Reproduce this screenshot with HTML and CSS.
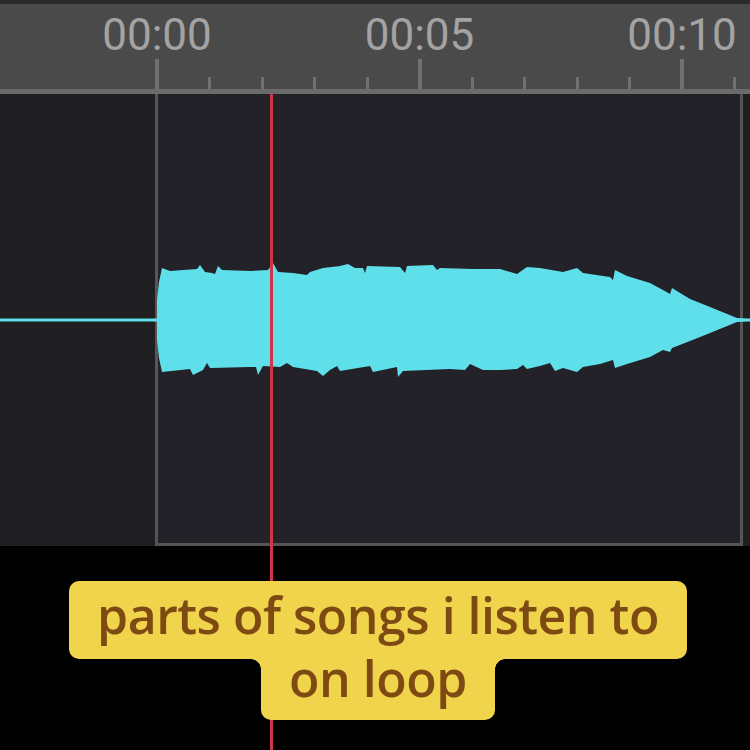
FILE: index.html
```html
<!DOCTYPE html>
<html lang="en">
<head>
    <meta charset="UTF-8">
    <meta name="viewport" content="width=device-width, initial-scale=1.0">
    <title>Loop Editor</title>
    <link rel="stylesheet" href="styles.css">
</head>
<body>
    <div class="screen">
        <div class="topbar"></div>

        <div class="ruler">
            <div class="labels">
                <span class="label">00:00</span>
                <span class="label">00:05</span>
                <span class="label">00:10</span>
            </div>
            <div class="ticks">
                <div class="tick major"></div>
                <div class="tick"></div>
                <div class="tick"></div>
                <div class="tick"></div>
                <div class="tick"></div>
                <div class="tick major"></div>
                <div class="tick"></div>
                <div class="tick"></div>
                <div class="tick"></div>
                <div class="tick"></div>
                <div class="tick major"></div>
                <div class="tick"></div>
            </div>
        </div>
        <div class="ruler-line"></div>

        <div class="track">
            <div class="lead"></div>
            <div class="selection"></div>
            <div class="tail"></div>
            <!-- waveform spans the lead-in and the selected region -->
            <svg class="wave" viewBox="0 94 750 452" width="750" height="452">
                <rect x="0" y="318.5" width="158" height="3" fill="#5fdfea"/>
                <path fill="#5fdfea" d="M157,320 L157,300 L159,282 L162,268 L170,271 L197,269 L200,265 L205,272 L212,273 L215,274 L218,266 L222,270 L250,271 L268,270 L273,263 L278,272 L293,273 L307,275 L310,272 L323,268 L340,266 L348,264 L355,268 L363,268 L365,273 L367,266 L400,267 L405,273 L407,266 L433,265 L437,270 L440,268 L473,269 L500,269 L517,274 L527,267 L540,268 L563,272 L577,268 L583,273 L610,277 L613,280 L615,270 L627,276 L650,283 L663,290 L670,294 L672,288 L690,299 L710,307 L737,318 L750,318.5 L750,321.5 L737,322 L710,333 L690,341 L672,348 L670,352 L663,350 L650,357 L627,364 L615,368 L613,360 L600,364 L583,367 L577,372 L563,368 L555,371 L550,363 L540,366 L527,369 L523,365 L517,369 L500,370 L483,370 L470,364 L465,370 L450,369 L403,371 L398,377 L397,367 L373,372 L370,366 L340,371 L337,366 L330,370 L323,376 L317,371 L293,367 L287,363 L280,367 L263,366 L258,375 L256,367 L250,367 L210,368 L207,363 L203,370 L193,375 L190,369 L162,372 L159,358 L157,340 Z"/>
            </svg>
        </div>

        <div class="below">
            <div class="caption">
                <div class="caption-line">parts of songs i listen to</div>
                <div class="caption-line last">on loop</div>
            </div>
        </div>

        <div class="playhead"></div>
    </div>
</body>
</html>
```

FILE: styles.css
```css
body {
    margin: 0;
    background: #000;
    font-family: Roboto, "Liberation Sans", sans-serif;
}

.screen {
    position: relative;
    width: 750px;
    height: 750px;
    overflow: hidden;
    background: #000;
}

.topbar {
    height: 4px;
    background: #2a2a2d;
}

.ruler {
    height: 85px;
    background: #4a4a4a;
    display: flex;
    flex-direction: column;
    padding-top: 9px;
    box-sizing: border-box;
}

.labels {
    display: flex;
    height: 44px;
    padding-left: 25.75px;
}

.label {
    flex: none;
    width: 262.5px;
    text-align: center;
    font-size: 44px;
    line-height: 44px;
    color: #a3a3a3;
}

.ticks {
    flex: 1;
    display: flex;
    align-items: flex-end;
    padding-left: 155.5px;
}

.tick {
    width: 52.5px;
    height: 12px;
    flex: none;
}

.tick::before {
    content: "";
    display: block;
    width: 3px;
    height: 100%;
    background: #707070;
}

.tick.major {
    height: 30px;
}

.tick.major::before {
    width: 4px;
    margin-left: -0.5px;
}

.ruler-line {
    height: 5px;
    background: #6b6b6b;
}

.track {
    position: relative;
    display: flex;
    height: 452px;
}

.lead {
    width: 155px;
    background: #1f1f21;
}

.selection {
    width: 588px;
    box-sizing: border-box;
    border: 3px solid #555557;
    border-top: 0;
    background: #222228;
}

.tail {
    flex: 1;
    background: #1f1f21;
}

.wave {
    position: absolute;
    top: 0;
    left: 0;
    display: block;
}

.below {
    display: flex;
    justify-content: center;
    padding: 35px 0 0 6px;
}

.caption {
    position: relative;
    z-index: 2;
    display: flex;
    flex-direction: column;
    align-items: center;
    font-family: "Open Sans", "Liberation Sans", sans-serif;
    font-weight: 600;
    font-size: 50px;
    line-height: 63px;
    color: #7d4a13;
    letter-spacing: -0.5px;
}

.caption-line {
    background: #f0d44c;
    border-radius: 10px;
    padding: 3px 28px 12px;
    white-space: nowrap;
}

.caption-line.last {
    position: relative;
    margin-top: -12px;
    padding: 0 28px 10px;
    border-radius: 0 0 10px 10px;
}

/* concave fillets where the short line meets the long one */
.caption-line.last::before,
.caption-line.last::after {
    content: "";
    position: absolute;
    top: 12px;
    width: 10px;
    height: 10px;
}

.caption-line.last::before {
    left: -10px;
    background: radial-gradient(circle at 0 100%, transparent 9.5px, #f0d44c 10px);
}

.caption-line.last::after {
    right: -10px;
    background: radial-gradient(circle at 100% 100%, transparent 9.5px, #f0d44c 10px);
}

.playhead {
    position: absolute;
    left: 270px;
    top: 94px;
    bottom: 0;
    width: 3px;
    background: #cf3449;
    z-index: 1;
}
```
